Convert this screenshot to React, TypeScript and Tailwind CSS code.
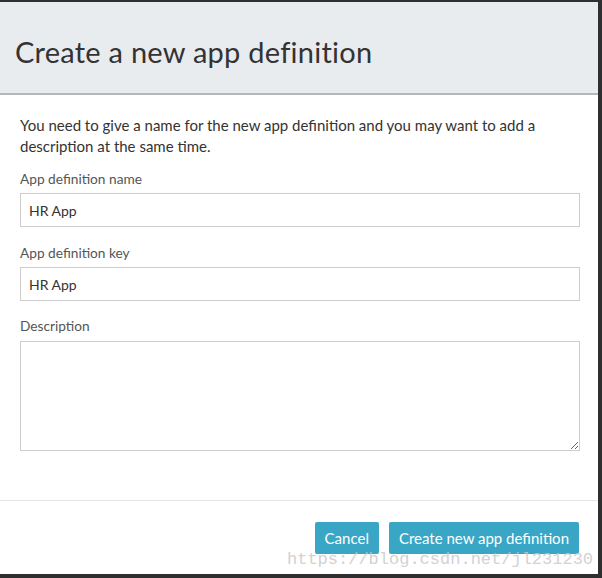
export default function App() {
  return (
    <div
      className="w-[602px] h-[578px] bg-[#2f2f2f] pt-[2px] pr-[4px] pb-[4px] overflow-hidden"
      style={{ fontFamily: "Lato, 'Open Sans', sans-serif" }}
    >
      <div className="relative flex h-full flex-col bg-white">
        <div className="h-[93px] shrink-0 border-b-2 border-[#b3b8bb] bg-[#e8ecef] pl-[15px] pt-[30px]">
          <h1 className="text-[29px] leading-[40px] tracking-[0.25px] text-[#333]">Create a new app definition</h1>
        </div>
        <div className="flex-1 pl-[20px] pr-[18px] pt-[20px]">
          <p className="text-[15px] leading-[21px] text-[#333]">
            You need to give a name for the new app definition and you may want to add a description at the same time.
          </p>
          <label className="mt-[13px] block text-[13.7px] leading-[18px] text-[#555]">App definition name</label>
          <input
            defaultValue="HR App"
            className="mt-[5px] block h-[34px] w-full border border-[#ccc] px-[8px] text-[14px] text-[#333] outline-none"
          />
          <label className="mt-[17px] block text-[13.7px] leading-[18px] text-[#555]">App definition key</label>
          <input
            defaultValue="HR App"
            className="mt-[5px] block h-[34px] w-full border border-[#ccc] px-[8px] text-[14px] text-[#333] outline-none"
          />
          <label className="mt-[16px] block text-[13.7px] leading-[18px] text-[#555]">Description</label>
          <textarea className="mt-[6px] block h-[110px] w-full border border-[#ccc] px-[8px] text-[14px] outline-none" />
        </div>
        <div className="flex shrink-0 justify-end gap-[10px] border-t border-[#e5e5e5] px-[19px] pb-[20px] pt-[21px]">
          <button className="h-[32px] rounded-[2px] bg-[#39a6c6] px-[10px] text-[15px] text-white">Cancel</button>
          <button className="h-[32px] rounded-[2px] bg-[#39a6c6] px-[10px] text-[15px] text-white">
            Create new app definition
          </button>
        </div>
        <span
          className="pointer-events-none absolute bottom-[4px] left-[287px] text-[17px] leading-[20px] text-[#c8c8c8] opacity-80"
          style={{ fontFamily: "'Liberation Mono', monospace" }}
        >
          https://blog.csdn.net/jl231230
        </span>
      </div>
    </div>
  );
}
